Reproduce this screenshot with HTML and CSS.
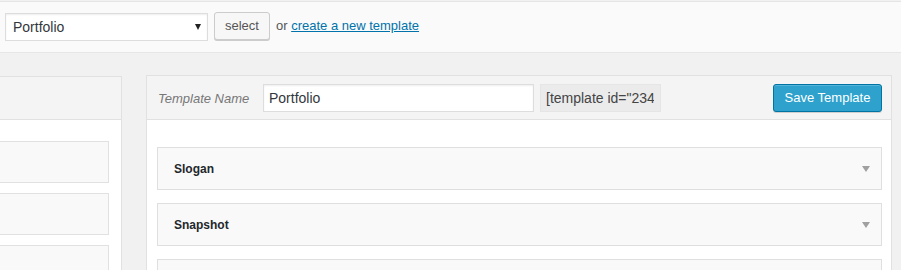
FILE: index.html
```html
<!DOCTYPE html>
<html lang="en">
<head>
    <meta charset="UTF-8">
    <meta name="viewport" content="width=device-width, initial-scale=1.0">
    <title>Templates</title>
    <link rel="stylesheet" href="styles.css">
</head>
<body>

    <!-- Template chooser -->
    <div class="topbar">
        <div class="select-wrap">
            <select class="template-select">
                <option>Portfolio</option>
            </select>
        </div>
        <button class="btn">select</button>
        <span class="or">or <a href="#">create a new template</a></span>
    </div>

    <div class="columns">
        <!-- Sidebar with available blocks -->
        <div class="panel side-panel">
            <div class="panel-head"></div>
            <div class="side-body">
                <div class="side-box"></div>
                <div class="side-box"></div>
                <div class="side-box"></div>
            </div>
        </div>

        <!-- Template editor -->
        <div class="panel main-panel">
            <div class="panel-head main-head">
                <label class="name-label" for="tpl-name">Template Name</label>
                <input class="name-input" id="tpl-name" type="text" value="Portfolio">
                <input class="shortcode" type="text" value='[template id="234"]' readonly>
                <button class="btn-primary">Save Template</button>
            </div>
            <div class="main-body">
                <div class="card"><span class="card-title">Slogan</span><span class="arrow"></span></div>
                <div class="card"><span class="card-title">Snapshot</span><span class="arrow"></span></div>
                <div class="card"></div>
            </div>
        </div>
    </div>

</body>
</html>
```

FILE: styles.css
```css
body {
    margin: 0;
    background: #f1f1f1;
    font-family: "Liberation Sans", Arial, sans-serif;
    font-size: 13px;
    color: #444;
    overflow: hidden;
}

/* top bar */
.topbar {
    margin-top: 1px;
    border-top: 1px solid #e5e5e5;
    border-bottom: 1px solid #e6e6e6;
    background: #fafafa;
    display: flex;
    align-items: flex-start;
    padding: 10px 5px 11px;
}
.select-wrap {
    position: relative;
    margin-top: 1px;
}
.select-wrap::after {
    content: "";
    position: absolute;
    right: 7px;
    top: 11px;
    border-left: 3px solid transparent;
    border-right: 3px solid transparent;
    border-top: 6px solid #222;
}
.template-select {
    appearance: none;
    -webkit-appearance: none;
    width: 203px;
    height: 28px;
    margin: 0;
    padding: 0 7px;
    border: 1px solid #ddd;
    border-radius: 0;
    background: #fff;
    font-family: inherit;
    font-size: 14px;
    color: #32373c;
    box-shadow: inset 0 1px 2px rgba(0, 0, 0, .07);
}
.btn {
    margin-left: 6px;
    height: 28px;
    padding: 0 10px 1px;
    border: 1px solid #ccc;
    border-radius: 3px;
    background: #f7f7f7;
    box-shadow: 0 1px 0 #ccc;
    font-family: inherit;
    font-size: 13px;
    color: #555;
}
.or {
    margin-left: 6px;
    line-height: 28px;
    color: #555;
}
.or a {
    color: #0073aa;
}

/* columns */
.columns {
    display: flex;
    align-items: flex-start;
    gap: 24px;
    margin-top: 22px;
}
.panel {
    box-sizing: border-box;
    border: 1px solid #e1e1e1;
    background: #fff;
}
.panel-head {
    background: #f4f4f4;
    border-bottom: 1px solid #e1e1e1;
}
.side-panel {
    margin-left: -300px;
    margin-top: 1px;
    width: 422px;
    flex: none;
}
.side-panel .panel-head {
    height: 42px;
}
.side-body {
    padding: 21px 12px 0 0;
}
.side-box {
    height: 40px;
    margin-bottom: 10px;
    border: 1px solid #e1e1e1;
    background: #f9f9f9;
}

.main-panel {
    width: 746px;
    flex: none;
}
.main-head {
    box-sizing: border-box;
    height: 44px;
    padding: 1px 9px 0 11px;
    display: flex;
    align-items: center;
}
.name-label {
    width: 105px;
    font-style: italic;
    color: #777;
}
.name-input {
    box-sizing: border-box;
    width: 271px;
    height: 28px;
    margin: 0;
    padding: 0 5px;
    border: 1px solid #ddd;
    box-shadow: inset 0 1px 2px rgba(0, 0, 0, .07);
    font-family: inherit;
    font-size: 14px;
    color: #32373c;
    outline: none;
}
.shortcode {
    box-sizing: border-box;
    width: 121px;
    height: 28px;
    margin: 0 0 0 6px;
    padding: 0 6px 0 5px;
    border: 1px solid #e5e5e5;
    background: #ebebeb;
    font-family: inherit;
    font-size: 14px;
    color: #444;
    outline: none;
}
.btn-primary {
    margin-left: auto;
    height: 28px;
    width: 109px;
    padding: 0 0 1px;
    border: 1px solid #0074a2;
    border-radius: 3px;
    background: #2ea2cc;
    box-shadow: inset 0 1px 0 rgba(120, 200, 230, .5), 0 1px 0 rgba(0, 0, 0, .15);
    font-family: inherit;
    font-size: 13px;
    color: #fff;
}

.main-body {
    padding: 27px 9px 0 10px;
}
.card {
    box-sizing: border-box;
    height: 43px;
    margin-bottom: 13px;
    padding: 0 11px 0 16px;
    border: 1px solid #dfdfdf;
    background: #f9f9f9;
    display: flex;
    align-items: center;
    justify-content: space-between;
}
.card-title {
    font-size: 12px;
    font-weight: bold;
    color: #23282d;
}
.arrow {
    border-left: 4px solid transparent;
    border-right: 4px solid transparent;
    border-top: 6px solid #a0a0a0;
}
```
